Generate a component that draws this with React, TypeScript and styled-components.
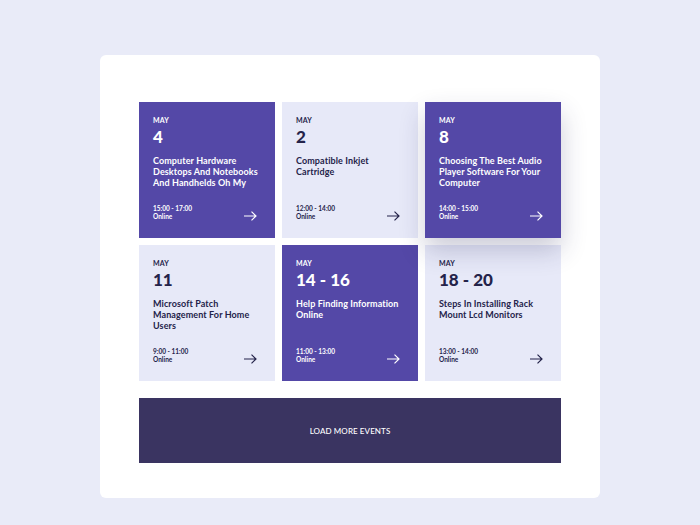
import styled, { createGlobalStyle } from "styled-components";

const GlobalStyle = createGlobalStyle`
  body {
    margin: 0;
    background: #e9ebf8;
    font-family: "Lato", "Noto Sans", sans-serif;
  }
`;

const Page = styled.div`
  width: 700px;
  height: 525px;
  display: flex;
  justify-content: center;
  padding-top: 55px;
  box-sizing: border-box;
`;

const Card = styled.div`
  width: 500px;
  height: 443px;
  background: #ffffff;
  border-radius: 6px;
  padding: 47px 39px 35px 39px;
  box-sizing: border-box;
  display: flex;
  flex-direction: column;
  gap: 17px;
`;

const Grid = styled.div`
  display: grid;
  grid-template-columns: repeat(3, 136px);
  grid-auto-rows: 136px;
  gap: 7px;
`;

const Tile = styled.div<{ $dark?: boolean; $raised?: boolean }>`
  position: relative;
  background: ${(p) => (p.$dark ? "#5448a7" : "#e7e9f8")};
  color: ${(p) => (p.$dark ? "#ffffff" : "#24234a")};
  padding: 14px 14px 17px 14px;
  box-sizing: border-box;
  display: flex;
  flex-direction: column;
  box-shadow: ${(p) =>
    p.$raised ? "0 12px 24px rgba(40, 40, 90, 0.24)" : "none"};
  z-index: ${(p) => (p.$raised ? 1 : 0)};
`;

const Month = styled.div`
  font-size: 7px;
  font-weight: 700;
  letter-spacing: 0.2px;
  line-height: 9px;
`;

const Day = styled.div`
  font-size: 17px;
  font-weight: 900;
  line-height: 20px;
  margin-top: 2px;
`;

const Title = styled.div`
  font-size: 9px;
  font-weight: 700;
  line-height: 11px;
  letter-spacing: 0.1px;
  margin-top: 8px;
`;

const Footer = styled.div`
  margin-top: auto;
  display: flex;
  align-items: flex-end;
  justify-content: space-between;
`;

const Meta = styled.div`
  font-size: 6.5px;
  font-weight: 700;
  line-height: 8px;
`;

const Arrow = styled.svg`
  width: 13px;
  height: 10px;
  margin-right: 4px;
`;

const LoadMore = styled.button`
  height: 65px;
  border: none;
  background: #3a3461;
  color: #ffffff;
  font-family: "Lato", "Noto Sans", sans-serif;
  font-size: 8px;
  font-weight: 500;
  letter-spacing: 0.1px;
  cursor: pointer;
`;

const events = [
  { day: "4", title: "Computer Hardware Desktops And Notebooks And Handhelds Oh My", time: "15:00 - 17:00", dark: true },
  { day: "2", title: "Compatible Inkjet Cartridge", time: "12:00 - 14:00" },
  { day: "8", title: "Choosing The Best Audio Player Software For Your Computer", time: "14:00 - 15:00", dark: true, raised: true },
  { day: "11", title: "Microsoft Patch Management For Home Users", time: "9:00 - 11:00" },
  { day: "14 - 16", title: "Help Finding Information Online", time: "11:00 - 13:00", dark: true },
  { day: "18 - 20", title: "Steps In Installing Rack Mount Lcd Monitors", time: "13:00 - 14:00" },
];

export default function App() {
  return (
    <>
      <GlobalStyle />
      <Page>
        <Card>
          <Grid>
            {events.map((ev) => (
              <Tile key={ev.day} $dark={ev.dark} $raised={ev.raised}>
                <Month>MAY</Month>
                <Day>{ev.day}</Day>
                <Title>{ev.title}</Title>
                <Footer>
                  <Meta>
                    {ev.time}
                    <br />
                    Online
                  </Meta>
                  <Arrow viewBox="0 0 13 10" fill="none" stroke="currentColor" strokeWidth="1.2">
                    <path d="M0 5h12M7.5 0.6L12 5l-4.5 4.4" />
                  </Arrow>
                </Footer>
              </Tile>
            ))}
          </Grid>
          <LoadMore>LOAD MORE EVENTS</LoadMore>
        </Card>
      </Page>
    </>
  );
}
